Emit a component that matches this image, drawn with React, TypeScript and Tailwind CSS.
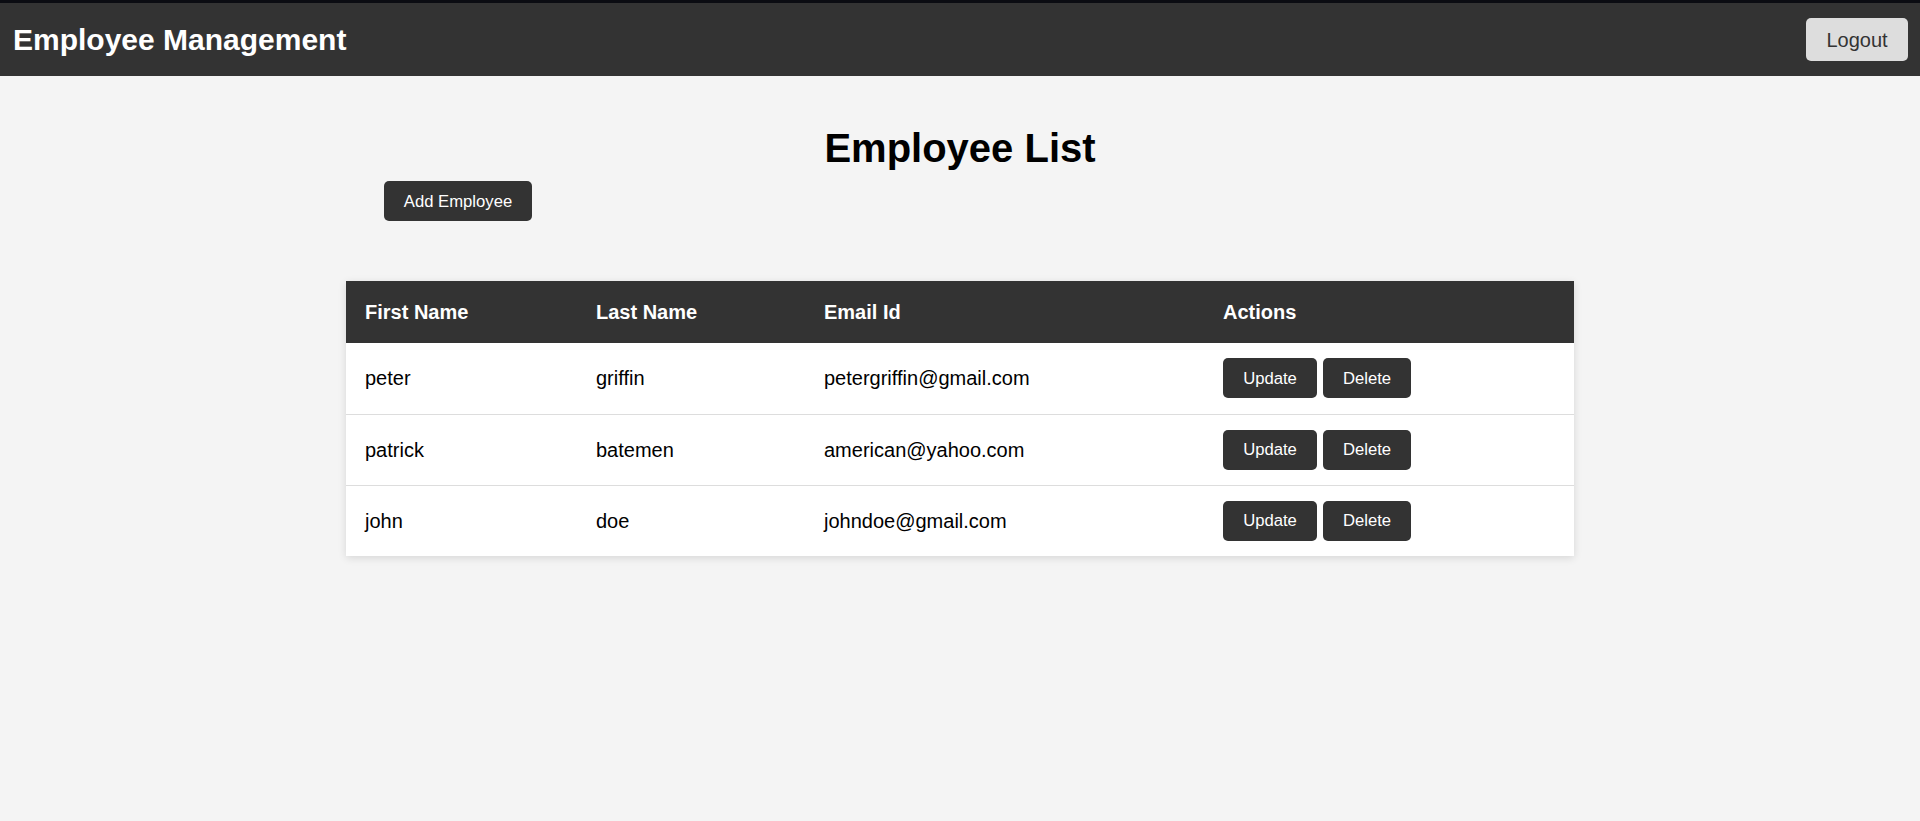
const employees = [
  { id: 1, firstName: 'peter', lastName: 'griffin', email: 'petergriffin@gmail.com' },
  { id: 2, firstName: 'patrick', lastName: 'batemen', email: 'american@yahoo.com' },
  { id: 3, firstName: 'john', lastName: 'doe', email: 'johndoe@gmail.com' },
];

function Navbar() {
  return (
    <div>
      <div className="h-[3px] bg-[#0b0c12]" />
      <nav className="flex h-[73px] items-center justify-between bg-[#333333] pl-[13px] pr-[12px]">
        <h1 className="text-[30px] font-bold leading-none text-white">Employee Management</h1>
        <button className="h-[43px] w-[102px] rounded-[5px] bg-[#dddddd] text-[20px] text-[#333333]">
          Logout
        </button>
      </nav>
    </div>
  );
}

function ActionButton({ label, width }: { label: string; width: string }) {
  return (
    <button className={`h-[40px] ${width} rounded-[5px] bg-[#333333] text-[16.67px] text-white`}>
      {label}
    </button>
  );
}

function EmployeeTable() {
  return (
    <div className="mx-auto w-[1228px] bg-white shadow-[0_2px_8px_rgba(0,0,0,0.12)]">
      <table className="w-full table-fixed border-collapse text-left">
        <colgroup>
          <col className="w-[231px]" />
          <col className="w-[228px]" />
          <col className="w-[399px]" />
          <col className="w-[370px]" />
        </colgroup>
        <thead>
          <tr className="h-[62px] bg-[#333333] text-[20px] font-bold text-white">
            <th className="px-[19px]">First Name</th>
            <th className="px-[19px]">Last Name</th>
            <th className="px-[19px]">Email Id</th>
            <th className="px-[19px]">Actions</th>
          </tr>
        </thead>
        <tbody>
          {employees.map((emp, i) => (
            <tr
              key={emp.id}
              className={`h-[71px] text-[20px] text-black ${i < employees.length - 1 ? 'border-b border-[#dddddd]' : ''}`}
            >
              <td className="px-[19px]">{emp.firstName}</td>
              <td className="px-[19px]">{emp.lastName}</td>
              <td className="px-[19px]">{emp.email}</td>
              <td className="px-[19px]">
                <div className="flex gap-[6px]">
                  <ActionButton label="Update" width="w-[94px]" />
                  <ActionButton label="Delete" width="w-[88px]" />
                </div>
              </td>
            </tr>
          ))}
        </tbody>
      </table>
    </div>
  );
}

export default function App() {
  return (
    <div className="min-h-[821px] bg-[#f4f4f4] font-['Liberation_Sans',Arial,sans-serif]">
      <Navbar />
      <main className="pt-[49px]">
        <h2 className="text-center text-[40px] font-bold leading-[46px] text-black">Employee List</h2>
        <div className="mt-[10px] pl-[384px]">
          <button className="h-[40px] w-[148px] rounded-[5px] bg-[#333333] text-[16.67px] text-white">
            Add Employee
          </button>
        </div>
        <div className="mt-[60px]">
          <EmployeeTable />
        </div>
      </main>
    </div>
  );
}
